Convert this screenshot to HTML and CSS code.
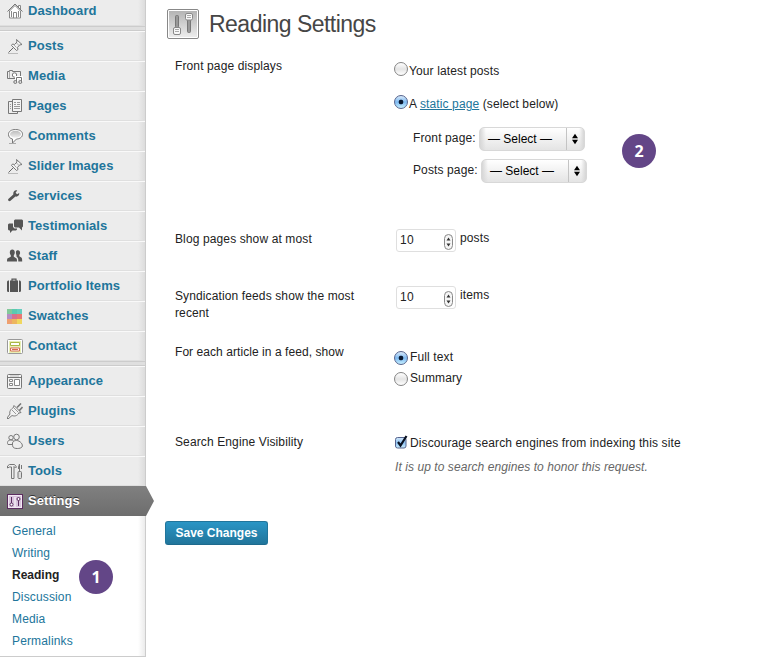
FILE: index.html
```
<!DOCTYPE html>
<html lang="en">
<head>
<meta charset="utf-8">
<title>Reading Settings</title>
<link rel="stylesheet" href="styles.css">
</head>
<body>
<div class="layout">
<nav class="sidebar">
  <a class="item first"><svg viewBox="0 0 16 16"><path d="M2.500 8v7h11V8L8 2.500zM11.500 5V2.500h2V7" fill="#fff" stroke="#888"/><path d="M.5 8.500 8 1l7.500 7.500" fill="none" stroke="#777"/><path d="M6.500 15V9.500h3V15M4.500 8v6M11.500 8v6" fill="none" stroke="#888"/></svg>Dashboard</a>
  <div class="sep"></div>
  <a class="item"><svg viewBox="0 0 16 16"><path d="m9.500 1.500 5.500 5-2.500.5-2 2.500.5 2-1.500 1-5-5 1-1.500 2 .5L10 4z" fill="#f2f2f2" stroke="#777"/><path d="m9.500 5 2 2M7 7l2.500 2.500" stroke="#aaa"/><path d="M6 10 1.500 14.500" stroke="#666" fill="none"/><path d="M1 15.500h10" stroke="#bbb"/></svg>Posts</a>
  <a class="item"><svg viewBox="0 0 16 16"><path d="M.5 3.500h2v-1h3v1h8v7H.5z" fill="#eee" stroke="#777"/><path d="M2.500 4v6" stroke="#aaa"/><circle cx="7.500" cy="7" r="2.200" fill="#fff" stroke="#777"/><path d="M9.500 14V9.500h5V14" fill="none" stroke="#fff" stroke-width="3"/><path d="M9.500 14V9.500h5V14" fill="none" stroke="#777"/><circle cx="8.300" cy="14" r="1.500" fill="#ddd" stroke="#777"/><circle cx="13.300" cy="14" r="1.500" fill="#ddd" stroke="#777"/></svg>Media</a>
  <a class="item"><svg viewBox="0 0 16 16"><path d="M5.500 3.500H1.500v12h9v-2" fill="#eee" stroke="#777"/><path d="M5.500 1.500h9v12h-9z" fill="#f4f4f4" stroke="#777"/><path d="M7 4.500h2M7 6.500h2M7 8.500h6M7 10.500h6M10 4.500h3M10 6.500h3M3 6.500h1M3 8.500h1M3 10.500h1" stroke="#999"/></svg>Pages</a>
  <a class="item"><svg viewBox="0 0 16 16"><defs><linearGradient id="bubble" x2="0" y2="1"><stop stop-color="#bbb"/><stop offset="1" stop-color="#eee"/></linearGradient></defs><path d="M8.500 1.500c4 0 7 1.800 7 4.800s-3 4.700-6 4.700L5.500 15v-4C3 10.500 1.500 9 1.500 6.300c0-3 3-4.800 7-4.800z" fill="#fff" stroke="#777"/><ellipse cx="8.500" cy="6.200" rx="5.500" ry="3.500" fill="url(#bubble)"/><path d="M2 15.500h7" stroke="#aaa"/></svg>Comments</a>
  <a class="item"><svg viewBox="0 0 16 16"><path d="m9.500 1.500 5.500 5-2.500.5-2 2.500.5 2-1.500 1-5-5 1-1.500 2 .5L10 4z" fill="#f2f2f2" stroke="#777"/><path d="m9.500 5 2 2M7 7l2.500 2.500" stroke="#aaa"/><path d="M6 10 1.500 14.500" stroke="#666" fill="none"/><path d="M1 15.500h10" stroke="#bbb"/></svg>Slider Images</a>
  <a class="item"><svg viewBox="0 0 16 16"><path d="M1.300 10.900 6.300 6.500C5.900 3.800 7.800 1.800 10.200 2.500L8.600 4.700l1.500 1.500L12.200 5.100c.4 2.300-1.500 4-3.800 3.500l-5.200 4.400c-1.300.6-2.700-.9-1.900-2.100z" fill="#555"/></svg>Services</a>
  <a class="item"><svg viewBox="0 0 16 16"><path d="M8 1.500h7l1 1v6l-1 1v3l-3-3H8l-1-1v-6z" fill="#555"/><path d="M6 5.500H2l-1 1v5l1 1h1V15l2.500-2.500H9l1-1v-1H7.500L6 9z" fill="#555"/></svg>Testimonials</a>
  <a class="item"><svg viewBox="0 0 16 16"><path d="M2.800 4.500c0-2 1-3 2.500-3s2.500 1 2.500 3c0 1.300-.5 2-1 2.800v1.500l2.400 1.500c.6.300.8 1 .8 3.200H0c0-2.200.2-3 .8-3.300l3-1.400V7.300c-.5-.8-1-1.500-1-2.800z" fill="#555"/><path d="M9 3.600c.3-1 1-1.400 2-1.400 1.300 0 2.100.9 2.100 2.500 0 1.100-.3 1.700-.8 2.300v1.300l2 1.200c.7.400.9 1.600.9 4h-3.900c0-3-.3-3.700-1.200-4.200L9.500 8.500V7.200C9 6.300 8.800 4.800 9 3.600z" fill="#555"/></svg>Staff</a>
  <a class="item"><svg viewBox="0 0 16 16"><path d="M5 3V1.100h4V3" fill="none" stroke="#555" stroke-width="1.200"/><path d="M3 2.500h8V14H3zM2 2.500V14C.5 14 0 13.500 0 12.500v-8c0-1.500.5-2 2-2zM12 2.500V14c1.500 0 2-.5 2-1.500v-8c0-1.500-.5-2-2-2z" fill="#555"/></svg>Portfolio Items</a>
  <a class="item"><svg viewBox="0 0 16 16" shape-rendering="crispEdges"><path d="M0 1h5v5H0z" fill="#83c99a"/><path d="M5 1h5v5H5z" fill="#5bcab0"/><path d="M10 1h5v5h-5z" fill="#66cdbf"/><path d="M0 6h5v5H0z" fill="#b68cc4"/><path d="M5 6h5v5H5z" fill="#d9708d"/><path d="M10 6h5v5h-5z" fill="#ea7773"/><path d="M0 11h5v5H0z" fill="#efa070"/><path d="M5 11h5v5H5z" fill="#edb65f"/><path d="M10 11h5v5h-5z" fill="#f0d75f"/></svg>Swatches</a>
  <a class="item"><svg viewBox="0 0 16 16"><rect x=".5" y="1.500" width="15" height="14" rx="1" fill="#fff" stroke="#999"/><path d="M2 3h12v12H2z" fill="#e8efb4"/><path d="M3.500 4.500h9v3h-9z" fill="#fff" stroke="#a9b745"/><path d="M3.500 10h9v3h-9z" fill="#fff" stroke="#d86b50"/><path d="M5 11.500h6" stroke="#d86b50"/></svg>Contact</a>
  <div class="sep"></div>
  <a class="item"><svg viewBox="0 0 16 16"><rect x=".5" y="1.500" width="14" height="14" rx="1" fill="#f4f4f4" stroke="#777"/><path d="M1 4.500h13" stroke="#777"/><path d="M2.500 6.500h3v2h-3zM2.500 10.500h3v2h-3zM7.500 6.500h5v6h-5z" fill="#fff" stroke="#888"/><path d="M3 3h9" stroke="#bbb"/></svg>Appearance</a>
  <a class="item"><svg viewBox="0 0 16 16"><path d="M10 4.500 14 .5M12 8l3.500-4" stroke="#777" stroke-width="1.600"/><path d="m7 2.500 7 7-2 .5c-2 3-4.500 3.500-7 2.500L1 16l-1-1 3-4C2 8.500 4 6 6.500 4.500z" fill="#f2f2f2" stroke="#777"/><path d="m5 7 4 4M7 5l4.500 4.500" stroke="#999"/></svg>Plugins</a>
  <a class="item"><svg viewBox="0 0 16 16"><g fill="#eee" stroke="#777"><circle cx="4" cy="4.700" r="2.200"/><path d="M1 11.500C-.5 8.500 1.500 7 4 7s4 2 3.500 4.500z"/><circle cx="9.500" cy="4" r="2.800"/><path d="M6 14C4.500 9.500 6 7.500 9.500 7.500s7 4 5.500 6.500c-1.500 2-8 2-9 0z"/></g></svg>Users</a>
  <a class="item"><svg viewBox="0 0 16 16"><path d="M.5 5V3l2-1.500h5L9.500 4l-1 1-1.500-1.500V15.500H4.500V4h-2z" fill="#eee" stroke="#777"/><path d="M12.500 8V1l-1 3v2" fill="none" stroke="#777"/><rect x="11" y="8.500" width="3.500" height="7" rx="1" fill="#ddd" stroke="#777"/><path d="M14.500 2v4" stroke="#777"/></svg>Tools</a>
  <a class="item current"><svg viewBox="0 0 16 16"><rect x=".5" y="1.500" width="15" height="14" fill="#f2e9f3" stroke="#5c2d60"/><rect x="2" y="3" width="12" height="11" fill="#d9c4dd"/><path d="M4.500 4v7M11.500 7v6" stroke="#5c2d60"/><circle cx="4.500" cy="11.500" r="1.500" fill="#fff" stroke="#5c2d60"/><circle cx="11.500" cy="6" r="1.500" fill="#fff" stroke="#5c2d60"/><path d="M8 4v10" stroke="#fff"/></svg>Settings</a>
  <div class="submenu">
    <a>General</a>
    <a>Writing</a>
    <a class="active">Reading</a>
    <a>Discussion</a>
    <a>Media</a>
    <a>Permalinks</a>
    <span class="badge step-one">1</span>
  </div>
</nav>
<main class="content">
  <header class="heading">
    <svg viewBox="0 0 32 32" width="32" height="32"><defs><linearGradient id="panel" x2="0" y2="1"><stop stop-color="#b4b4b4"/><stop offset="1" stop-color="#ececec"/></linearGradient></defs><rect x=".5" y="2.500" width="31" height="29" rx="1.500" fill="#fff" stroke="#888"/><rect x="2" y="4" width="28" height="26" fill="url(#panel)"/><rect x="8.500" y="8.500" width="3" height="12" rx="1" fill="#999" stroke="#777"/><rect x="20.500" y="12.500" width="3" height="13" rx="1" fill="#999" stroke="#777"/><rect x="6.500" y="20.500" width="7" height="7" rx="1.500" fill="#f8f8f8" stroke="#888"/><rect x="18.500" y="6.500" width="7" height="6.500" rx="1.500" fill="#f8f8f8" stroke="#888"/><path d="M8 22.500h4M8 24.500h4M20 8.500h4M20 10.500h4" stroke="#aaa"/></svg>
    <h1>Reading Settings</h1>
  </header>
  <form class="form">
    <section class="row front">
      <div class="label">Front page displays</div>
      <div class="field">
        <label class="choice"><i class="radio"></i>Your latest posts</label>
        <label class="choice static"><i class="radio on"></i><span>A <a>static page</a> (select below)</span></label>
        <div class="pick"><span>Front page:</span><span class="select"><b>— Select —</b><svg viewBox="0 0 7 12"><path d="M0 5 3.500 0 7 5zM0 7l3.500 5L7 7z"/></svg></span></div>
        <div class="pick posts"><span>Posts page:</span><span class="select"><b>— Select —</b><svg viewBox="0 0 7 12"><path d="M0 5 3.500 0 7 5zM0 7l3.500 5L7 7z"/></svg></span></div>
        <span class="badge step-two">2</span>
      </div>
    </section>
    <section class="row count">
      <div class="label">Blog pages show at most</div>
      <div class="field amount"><span class="number">10<svg viewBox="0 0 9 16"><rect x=".5" y=".5" width="8" height="15" rx="4" fill="#f5f5f5" stroke="#888"/><path d="m2.500 6.500 2-3 2 3zM2.500 9.500l2 3 2-3z" fill="#333"/></svg></span><span class="unit">posts</span></div>
    </section>
    <section class="row count">
      <div class="label">Syndication feeds show the most recent</div>
      <div class="field amount"><span class="number">10<svg viewBox="0 0 9 16"><rect x=".5" y=".5" width="8" height="15" rx="4" fill="#f5f5f5" stroke="#888"/><path d="m2.500 6.500 2-3 2 3zM2.500 9.500l2 3 2-3z" fill="#333"/></svg></span><span class="unit">items</span></div>
    </section>
    <section class="row feed">
      <div class="label">For each article in a feed, show</div>
      <div class="field">
        <label class="choice"><i class="radio on"></i>Full text</label>
        <label class="choice"><i class="radio"></i>Summary</label>
      </div>
    </section>
    <section class="row search">
      <div class="label">Search Engine Visibility</div>
      <div class="field">
        <label class="choice"><svg class="check" viewBox="0 0 14 14"><defs><linearGradient id="box" x2="0" y2="1"><stop stop-color="#d5e9fb"/><stop offset=".5" stop-color="#8fc3f3"/><stop offset="1" stop-color="#c9edff"/></linearGradient></defs><rect x="1.500" y="2.500" width="10.500" height="10.500" rx="2" fill="url(#box)" stroke="#56648e"/><path d="m4 7 2.500 3.500L12.500 1" fill="none" stroke="#081020" stroke-width="2.200"/></svg>Discourage search engines from indexing this site</label>
        <p class="hint">It is up to search engines to honor this request.</p>
      </div>
    </section>
    <button class="save" type="button">Save Changes</button>
  </form>
</main>
</div>
</body>
</html>
```
FILE: styles.css
```
* { box-sizing: border-box; }
body {
  margin: 0;
  height: 657px;
  overflow: hidden;
  background: #fff;
  color: #222;
  font: 12px/17px "Liberation Sans", Arial, sans-serif;
  letter-spacing: .12px;
}
.layout { display: flex; height: 657px; }

.sidebar {
  width: 146px;
  flex: none;
  border-right: 1px solid #ccc;
  background: linear-gradient(to left, #dcdcdc, #ececec 7px);
}
.item {
  display: flex;
  align-items: flex-start;
  height: 30px;
  padding: 5px 0 0 7px;
  border-top: 1px solid #f9f9f9;
  border-bottom: 1px solid #dfdfdf;
  color: #21759b;
  font-size: 13px;
  line-height: 17px;
  font-weight: bold;
  letter-spacing: .07px;
}
.item svg { width: 16px; height: 16px; margin: 1px 5px 0 0; flex: none; }
.item.first { height: 26px; padding-top: 2px; border-top: 0; }
.sep {
  height: 5px;
  background: #dfdfdf;
  border-top: 1px solid #ccc;
  border-bottom: 1px solid #ccc;
}
.item.current {
  position: relative;
  width: 146px;
  border: 0;
  padding-top: 6px;
  background: linear-gradient(#808080, #6d6d6d);
  color: #fff;
  text-shadow: 0 -1px 0 #333;
}
.item.current::after {
  content: "";
  position: absolute;
  left: 146px;
  top: 0;
  width: 8px;
  height: 30px;
  background: linear-gradient(#808080, #6d6d6d);
  clip-path: polygon(0 0, 100% 50%, 0 100%);
}
.submenu {
  position: relative;
  height: 141px;
  padding: 4px 0 0 12px;
  border-bottom: 1px solid #ccc;
  background: linear-gradient(to left, #ebebeb, #fff 7px);
  letter-spacing: .15px;
}
.submenu a { display: block; height: 22px; line-height: 22px; color: #21759b; }
.submenu .active { color: #222; font-weight: bold; letter-spacing: 0; }

.badge {
  position: absolute;
  width: 34px;
  height: 34px;
  border-radius: 50%;
  background: #634687;
  color: #fff;
  font: bold 16px/34px "Open Sans", sans-serif;
  letter-spacing: 0;
  text-align: center;
}
.step-one { left: 79px; top: 44px; }
.step-two { left: 227px; top: 76px; }

.content { flex: 1; padding: 7px 0 0 19px; }
.heading { display: flex; height: 51px; padding-left: 2px; }
h1 {
  margin: 0 0 0 10px;
  color: #464646;
  font-size: 23px;
  line-height: 34px;
  font-weight: normal;
  letter-spacing: -.52px;
}
.row { display: grid; grid-template-columns: 220px 1fr; padding-left: 10px; }
.label { width: 190px; }
.field { position: relative; }
.front { height: 173px; }
.front .field { padding-top: 5px; }
.choice { display: flex; align-items: center; height: 17px; }
.radio {
  width: 14px;
  height: 14px;
  margin: -3px 0 0 -1px;
  border: 1px solid #858585;
  border-radius: 50%;
  background: linear-gradient(#fff, #e4e4e4 50%, #fff);
}
.radio.on {
  border-color: #56648e;
  background: radial-gradient(circle, #081830 0 2px, transparent 2.700px), linear-gradient(#d9eafa, #7db9f1 50%, #c5efff);
}
.front .radio { margin: -5px 1px 0 -1px; }
.static { margin-top: 16px; }
.static a { color: #21759b; text-decoration: underline; }
.pick { display: flex; align-items: flex-start; margin: 14px 0 0 18px; height: 24px; }
.pick.posts { margin-top: 8px; }
.pick > span:first-child { width: 66px; line-height: 23px; white-space: nowrap; }
.pick.posts > span:first-child { width: 68px; }
.select {
  display: flex;
  width: 106px;
  height: 24px;
  border: 1px solid #d8d8d8;
  border-radius: 5px;
  background: linear-gradient(to right, #d6d6d6, transparent 6px, transparent 99px, #d6d6d6), linear-gradient(#fff, #e4e4e4);
  color: #000;
}
.select b { width: 87px; padding-left: 8px; border-right: 1px solid #c4c4c4; font-weight: normal; line-height: 23px; letter-spacing: 0; }
.select svg { width: 6px; height: 12px; margin: 5px 0 0 5px; }

.count { height: 57px; }
.count + .feed { margin-top: -1px; }
.amount { display: flex; padding-left: 1px; gap: 4px; }
.unit { margin-top: -1px; }
.number {
  display: flex;
  justify-content: space-between;
  width: 60px;
  height: 23px;
  margin-top: -2px;
  padding: 0 2px 0 3px;
  border: 1px solid #dfdfdf;
  border-radius: 3px;
  line-height: 21px;
  letter-spacing: .3px;
}
.number svg { width: 9px; height: 16px; margin-top: 4px; }
.feed { height: 90px; }
.feed .label { letter-spacing: .06px; }
.feed .field { padding-top: 5px; }
.feed .radio { margin: 1px 2px 0 -1px; }
.feed .choice + .choice { margin-top: 4px; }
.search { height: 87px; }
.check { width: 14px; height: 14px; margin: -2px 2px 0 -1px; }
.search .choice { padding-top: 1px; }
.hint { margin: 8px 0 0; color: #666; font-style: italic; letter-spacing: .07px; }
.save {
  display: block;
  width: 103px;
  height: 24px;
  padding: 0;
  border: 1px solid #21759b;
  border-bottom-color: #1e6a8d;
  border-radius: 3px;
  background: linear-gradient(#2a95c5, #21759b);
  color: #fff;
  font: bold 12px/22px "Liberation Sans", Arial, sans-serif;
}
```
